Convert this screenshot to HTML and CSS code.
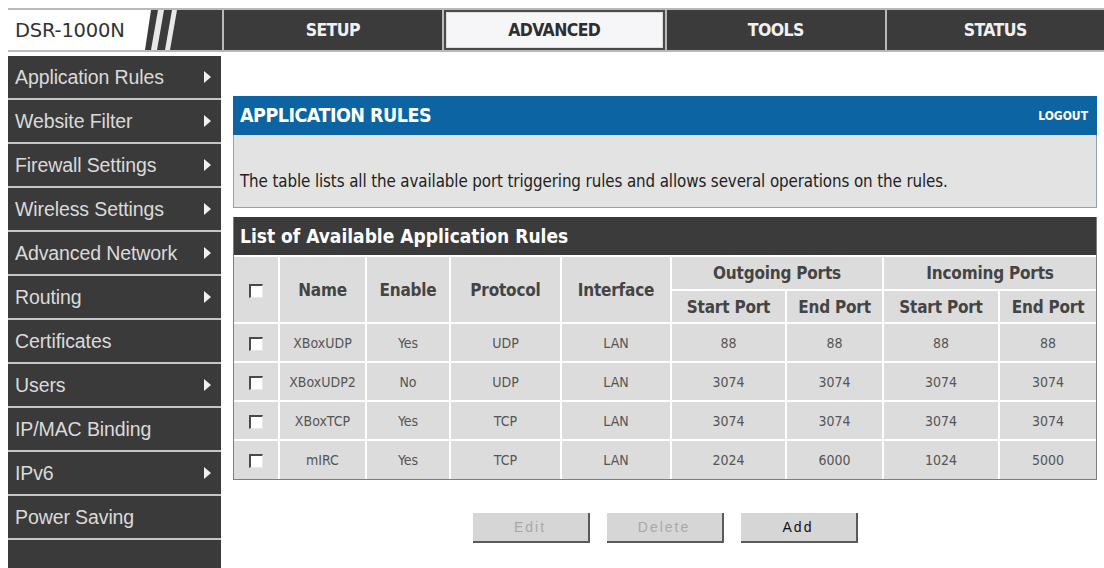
FILE: index.html
```html
<!DOCTYPE html>
<html>
<head>
<meta charset="utf-8">
<link rel="stylesheet" href="styles.css">
</head>
<body>
<div class="page">
  <header class="topbar">
    <div class="logo">
      <svg class="logo-art" width="214" height="40" viewBox="0 0 214 40">
        <polygon points="0,0 143,0 137,40 0,40" fill="#ffffff"/>
        <polygon points="150,0 156,0 149,40 143,40" fill="#e8e8e8"/>
        <polygon points="164,0 169,0 162,40 157,40" fill="#e8e8e8"/>
      </svg>
      <span class="logo-text">DSR-1000N</span>
    </div>
    <nav class="tabs">
      <div class="tab">SETUP</div>
      <div class="tab active">ADVANCED</div>
      <div class="tab">TOOLS</div>
      <div class="tab">STATUS</div>
    </nav>
  </header>
  <div class="content">
    <aside class="sidebar">
      <div class="item">Application Rules<span class="arrow"></span></div>
      <div class="item">Website Filter<span class="arrow"></span></div>
      <div class="item">Firewall Settings<span class="arrow"></span></div>
      <div class="item">Wireless Settings<span class="arrow"></span></div>
      <div class="item">Advanced Network<span class="arrow"></span></div>
      <div class="item">Routing<span class="arrow"></span></div>
      <div class="item">Certificates</div>
      <div class="item">Users<span class="arrow"></span></div>
      <div class="item">IP/MAC Binding</div>
      <div class="item">IPv6<span class="arrow"></span></div>
      <div class="item">Power Saving</div>
      <div class="item filler"></div>
    </aside>
    <main class="main">
      <section class="panel">
        <div class="panel-head">
          <span class="panel-title">APPLICATION RULES</span>
          <span class="logout">LOGOUT</span>
        </div>
        <div class="panel-desc">The table lists all the available port triggering rules and allows several operations on the rules.</div>
      </section>
      <section class="rules">
        <div class="rules-title">List of Available Application Rules</div>
        <table class="grid">
          <colgroup>
            <col class="c-cb"><col class="c-name"><col class="c-enable"><col class="c-proto"><col class="c-iface">
            <col class="c-os"><col class="c-oe"><col class="c-is"><col class="c-ie">
          </colgroup>
          <thead>
            <tr class="h1">
              <th rowspan="2"><span class="cb"></span></th>
              <th rowspan="2">Name</th>
              <th rowspan="2">Enable</th>
              <th rowspan="2">Protocol</th>
              <th rowspan="2">Interface</th>
              <th colspan="2">Outgoing Ports</th>
              <th colspan="2">Incoming Ports</th>
            </tr>
            <tr class="h2">
              <th>Start Port</th><th>End Port</th><th>Start Port</th><th>End Port</th>
            </tr>
          </thead>
          <tbody>
            <tr><td><span class="cb"></span></td><td>XBoxUDP</td><td>Yes</td><td>UDP</td><td>LAN</td><td>88</td><td>88</td><td>88</td><td>88</td></tr>
            <tr><td><span class="cb"></span></td><td>XBoxUDP2</td><td>No</td><td>UDP</td><td>LAN</td><td>3074</td><td>3074</td><td>3074</td><td>3074</td></tr>
            <tr><td><span class="cb"></span></td><td>XBoxTCP</td><td>Yes</td><td>TCP</td><td>LAN</td><td>3074</td><td>3074</td><td>3074</td><td>3074</td></tr>
            <tr><td><span class="cb"></span></td><td>mIRC</td><td>Yes</td><td>TCP</td><td>LAN</td><td>2024</td><td>6000</td><td>1024</td><td>5000</td></tr>
          </tbody>
        </table>
      </section>
      <div class="buttons">
        <button class="btn disabled">Edit</button>
        <button class="btn disabled">Delete</button>
        <button class="btn">Add</button>
      </div>
    </main>
  </div>
</div>
</body>
</html>
```

FILE: styles.css
```css
* { box-sizing: border-box; }
html, body { margin: 0; padding: 0; background: #ffffff; overflow: hidden; }
body { width: 1104px; height: 568px; }

.page {
  padding: 8px 0 0 8px;
  font-family: "Liberation Sans", Arial, sans-serif;
}

/* ---------- top bar ---------- */
.topbar {
  display: flex;
  height: 44px;
  background: #b9b9b9;
  padding: 2px 0 2px 0;
  gap: 2px;
}
.logo {
  width: 214px;
  flex: none;
  display: grid;
  background: #3b3b3b;
}
.logo-art, .logo-text { grid-area: 1 / 1; }
.logo-text {
  align-self: center;
  padding-left: 7px;
  font-family: "DejaVu Sans", sans-serif;
  font-size: 19.5px;
  color: #333;
  letter-spacing: -0.2px;
}
.tabs {
  flex: 1;
  display: flex;
  gap: 2px;
}
.tab {
  flex: 1;
  display: flex;
  align-items: center;
  justify-content: center;
  background: #3b3b3b;
  color: #f0f0f0;
  font-family: "DejaVu Sans Condensed", "DejaVu Sans", sans-serif;
  font-stretch: condensed;
  font-weight: bold;
  font-size: 17.5px;
  letter-spacing: -0.6px;
}
.tab.active {
  background: #f6f5f8;
  color: #2e2e2e;
  font-weight: 600;
  border: 2px solid #4a4a4a;
  box-shadow: inset 0 0 0 1px #ddd;
}

/* ---------- body ---------- */
.content {
  display: flex;
  margin-top: 4px;
}
.sidebar {
  width: 213px;
  flex: none;
  display: flex;
  flex-direction: column;
  gap: 2px;
  background: #c6c6c6;
  height: 512px;
}
.item {
  height: 42px;
  flex: none;
  background: #3a3a3a;
  color: #dadada;
  font-size: 19.5px;
  display: flex;
  align-items: center;
  justify-content: space-between;
  padding: 0 10px 0 7px;
  letter-spacing: -0.1px;
}
.item.filler { flex: 1; }
.arrow {
  width: 0;
  height: 0;
  border-top: 6px solid transparent;
  border-bottom: 6px solid transparent;
  border-left: 7px solid #f0f0f0;
}

.main {
  flex: 1;
  padding: 40px 7px 0 12px;
}

/* ---------- panel ---------- */
.panel-head {
  height: 39px;
  background: #0c64a2;
  display: flex;
  align-items: center;
  justify-content: space-between;
  padding: 0 9px 0 7px;
  color: #fff;
  font-family: "DejaVu Sans Condensed", "DejaVu Sans", sans-serif;
  font-stretch: condensed;
  font-weight: bold;
}
.panel-title { font-size: 19.5px; letter-spacing: -0.5px; }
.logout { font-size: 12px; }
.panel-desc {
  height: 73px;
  background: #e3e3e3;
  border: 1px solid #8fa3b3;
  border-top: none;
  padding: 36px 0 0 6px;
  font-family: "DejaVu Sans Condensed", "DejaVu Sans", sans-serif;
  font-stretch: condensed;
  font-size: 16.8px;
  color: #222;
  letter-spacing: -0.1px;
}

/* ---------- rules table ---------- */
.rules {
  margin-top: 9px;
  border: 1px solid #7e7e7e;
  border-top: none;
}
.rules-title {
  height: 38px;
  background: #3b3b3b;
  color: #fff;
  display: flex;
  align-items: center;
  padding-left: 6px;
  font-family: "DejaVu Sans Condensed", "DejaVu Sans", sans-serif;
  font-stretch: condensed;
  font-weight: bold;
  font-size: 19px;
}
.grid {
  width: 100%;
  table-layout: fixed;
  border-collapse: collapse;
  font-family: "DejaVu Sans Condensed", "DejaVu Sans", sans-serif;
  font-stretch: condensed;
}
.c-cb { width: 45px; }
.c-name { width: 87px; }
.c-enable { width: 84px; }
.c-proto { width: 111px; }
.c-iface { width: 110px; }
.c-os { width: 115px; }
.c-oe { width: 97px; }
.c-is { width: 116px; }
.c-ie { width: 97px; }

.grid th, .grid td {
  background: #dcdcdc;
  border: 2px solid #ffffff;
  text-align: center;
  padding: 0;
}
.grid tr > :first-child { border-left: none; }
.grid tr > :last-child { border-right: none; }
.grid tbody tr:last-child td { border-bottom: none; }
.grid th {
  font-size: 17px;
  font-weight: bold;
  color: #444;
  letter-spacing: -0.2px;
}
.grid .h1 th { height: 34px; }
.grid .h2 th { height: 33px; }
.grid td {
  height: 39px;
  font-size: 14px;
  color: #555;
}
.cb {
  display: inline-block;
  width: 14px;
  height: 14px;
  background: #fff;
  border-top: 2px solid #4a4a4a;
  border-left: 2px solid #4a4a4a;
  border-right: 1px solid #e8e8e8;
  border-bottom: 1px solid #e8e8e8;
  vertical-align: middle;
}

/* ---------- buttons ---------- */
.buttons {
  display: flex;
  justify-content: center;
  gap: 17px;
  margin-top: 33px;
}
.btn {
  width: 117px;
  height: 30px;
  background: #d6d6d6;
  border: none;
  border-right: 2px solid #5a5a5a;
  border-bottom: 2px solid #5a5a5a;
  font-family: "Liberation Sans", Arial, sans-serif;
  font-size: 14px;
  letter-spacing: 2px;
  color: #111;
  padding: 0;
}
.btn.disabled { color: #a8a8a8; }
```
